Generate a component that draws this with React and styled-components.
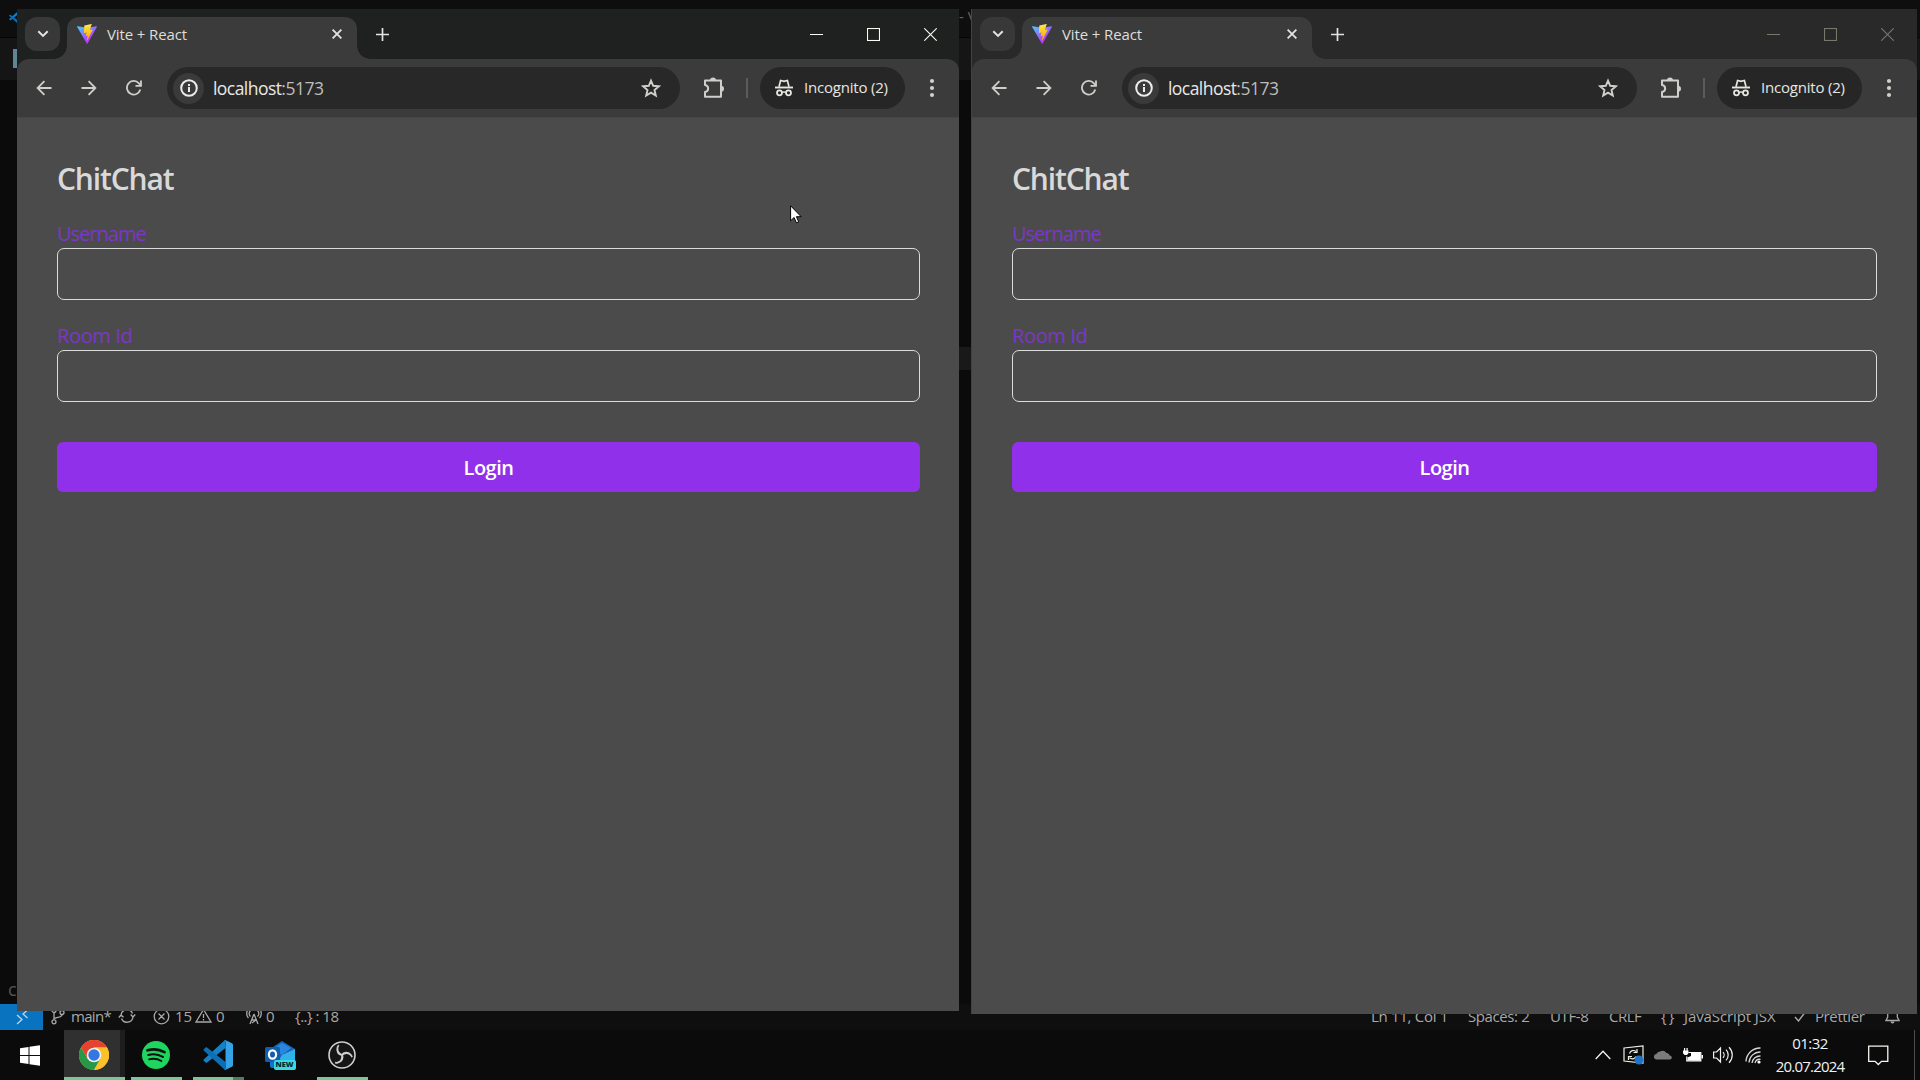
import React from "react";
import styled, { createGlobalStyle, css } from "styled-components";

const Global = createGlobalStyle`
  * { box-sizing: border-box; }
  html, body { margin: 0; padding: 0; background: #0b0b0b; overflow: hidden; }
  body { font-family: "Open Sans", "Noto Sans", sans-serif; color: #e3e3e3; }
  svg { display: block; flex: none; }
`;

const Desktop = styled.div`
  position: relative;
  width: 1920px;
  height: 1080px;
  overflow: hidden;
  display: flex;
  flex-direction: column;
  background: #0b0b0b;
`;

/* ---------- text ---------- */
const Text = styled.span`
  font-size: ${(p) => p.$size || 15}px;
  font-weight: ${(p) => p.$weight || 400};
  letter-spacing: ${(p) => p.$track || 0}px;
  color: ${(p) => p.$color || "inherit"};
  line-height: 1;
  white-space: pre;
`;

/* ---------- editor behind the windows ---------- */
const EditorTitle = styled.div`
  height: 38px;
  flex: none;
  display: flex;
  padding: 12px 0 0 9px;
  background: #0e0e0e;
  border-bottom: 1px solid #050505;
`;
const EditorTitleText = styled(Text)`
  margin-left: 939px;
  margin-top: -3px;
`;
const EditorTabs = styled.div`
  height: 42px;
  flex: none;
  display: flex;
  padding: 11px 0 0 13px;
  background: #151515;
`;
const TabMark = styled.div`
  width: 4px;
  height: 19px;
  background: #5f8793;
`;
const EditorBody = styled.div`
  flex: 1;
  display: flex;
  flex-direction: column;
  justify-content: space-between;
  padding: 267px 0 6px 0;
`;
const EditorLine = styled.div`
  height: 23px;
  margin: 0 40px 0 900px;
  background: #191919;
`;
const EditorHint = styled(Text)`
  padding-left: 8px;
`;
const StatusBar = styled.div`
  height: 26px;
  flex: none;
  display: flex;
  justify-content: space-between;
  background: #0f0f0f;
  color: #a9a9a9;
`;
const StatusGroup = styled.div`
  display: flex;
  align-items: center;
  padding: 0 ${(p) => p.$end || 0}px 2px 0;
`;
const StatusItem = styled.div`
  display: flex;
  align-items: center;
  gap: ${(p) => p.$gap || 4}px;
  margin-left: ${(p) => p.$ml || 0}px;
  width: ${(p) => (p.$w ? p.$w + "px" : "auto")};
`;
const Remote = styled.div`
  width: 43px;
  height: 26px;
  flex: none;
  display: flex;
  align-items: center;
  justify-content: center;
  background: #0a73c0;
`;

/* ---------- taskbar ---------- */
const TaskbarRoot = styled.div`
  height: 50px;
  flex: none;
  display: flex;
  justify-content: space-between;
  background: #0b0b0b;
`;
const TaskGroup = styled.div`
  display: flex;
  align-items: center;
`;
const TaskApp = styled.div`
  width: ${(p) => p.$w}px;
  height: 50px;
  margin-left: ${(p) => p.$ml || 0}px;
  display: flex;
  align-items: center;
  justify-content: center;
  padding-right: ${(p) => p.$pr || 0}px;
  background: ${(p) =>
    p.$active ? "linear-gradient(90deg, #303030 56px, #1d1d1d 56px)" : "transparent"};
  ${(p) => p.$open && css`
    border-bottom: 3px solid transparent;
    border-image: linear-gradient(90deg, #79c794 ${p.$split || 100}%, #4f7f62 ${p.$split || 100}%) 1;
    border-width: 0 0 3px;
    padding-top: 3px;
  `}
`;
const TrayItem = styled.div`
  width: ${(p) => p.$w}px;
  height: 50px;
  display: flex;
  align-items: center;
  justify-content: center;
`;
const Clock = styled.div`
  width: 84px;
  height: 50px;
  display: flex;
  flex-direction: column;
  align-items: center;
  justify-content: center;
  gap: 8px;
  color: #f2f2f2;
`;
const ShowDesktop = styled.div`
  width: 6px;
  height: 50px;
  border-left: 1px solid #4c4c4c;
  margin-left: 10px;
`;

/* ---------- browser ---------- */
const Win = styled.section`
  position: absolute;
  top: 9px;
  left: ${(p) => p.$x}px;
  width: ${(p) => p.$w}px;
  height: ${(p) => p.$h}px;
  display: flex;
  flex-direction: column;
  background: #4b4b4b;
  border-left: ${(p) => (p.$active ? "0" : "1px solid #424242")};
`;
const TitleBar = styled.div`
  height: 50px;
  flex: none;
  display: flex;
  background: ${(p) => (p.$active ? "#1f2020" : "#29292a")};
  padding: 8px ${(p) => (p.$active ? 0 : 1)}px 0 8px;
`;
const TabSearch = styled.div`
  width: 35px;
  height: 34px;
  border-radius: 12px;
  background: #383838;
  display: flex;
  align-items: center;
  justify-content: center;
`;
const Tab = styled.div`
  position: relative;
  width: 290px;
  height: 42px;
  margin-left: 7px;
  padding: 0 15px 8px 10px;
  display: flex;
  align-items: center;
  background: #3b3b3b;
  border-radius: 12px 12px 0 0;
  &::before, &::after {
    content: "";
    position: absolute;
    bottom: 0;
    width: 13px;
    height: 13px;
  }
  &::before {
    left: -13px;
    background: radial-gradient(circle at 0 0, transparent 12.5px, #3b3b3b 13px);
  }
  &::after {
    right: -13px;
    background: radial-gradient(circle at 100% 0, transparent 12.5px, #3b3b3b 13px);
  }
`;
const TabTitle = styled(Text)`
  flex: 1;
  margin-left: 10px;
`;
const NewTab = styled.div`
  width: 51px;
  height: 34px;
  display: flex;
  align-items: center;
  justify-content: center;
`;
const WinButtons = styled.div`
  display: flex;
  margin: -8px 0 0 auto;
  color: ${(p) => (p.$active ? "#fbfbf4" : "#77776c")};
`;
const WinButton = styled.div`
  width: 57px;
  height: 50px;
  padding-top: 1px;
  display: flex;
  align-items: center;
  justify-content: center;
`;
const ToolbarShell = styled.div`
  height: 59px;
  flex: none;
  background: ${(p) => (p.$active ? "#1f2020" : "#29292a")};
`;
const Toolbar = styled.div`
  height: 59px;
  display: flex;
  padding: 8px ${(p) => (p.$active ? 5 : 6)}px 9px 4px;
  background: #3b3b3b;
  border-bottom: 1px solid #454545;
  border-radius: 12px 12px 0 0;
  color: #cfcfcb;
`;
const ToolButton = styled.div`
  width: ${(p) => p.$w || 45}px;
  height: 42px;
  padding-left: ${(p) => p.$pl || 0}px;
  display: flex;
  align-items: center;
  justify-content: center;
`;
const Omnibox = styled.div`
  flex: 1;
  height: 42px;
  margin-left: 11px;
  padding: 0 19px 0 6px;
  display: flex;
  align-items: center;
  border-radius: 21px;
  background: #282828;
`;
const SiteInfo = styled.div`
  width: 31px;
  height: 31px;
  border-radius: 16px;
  background: #3a3a3a;
  display: flex;
  align-items: center;
  justify-content: center;
  color: #ececec;
`;
const Address = styled.div`
  flex: 1;
  display: flex;
  margin-left: 9px;
  padding-top: 1px;
`;
const Divider = styled.div`
  width: 2px;
  height: 20px;
  margin: 11px 12px 0 0;
  background: #5b5b5b;
`;
const Incognito = styled.div`
  width: 145px;
  height: 42px;
  margin-right: 4px;
  padding: 0 0 1px 15px;
  display: flex;
  align-items: center;
  gap: 11px;
  border-radius: 21px;
  background: #262626;
  color: #e6e6e2;
`;

/* ---------- page ---------- */
const Page = styled.main`
  flex: 1;
  display: flex;
  flex-direction: column;
  padding: 40px ${(p) => (p.$active ? 39 : 40)}px 40px 40px;
  background: #4b4b4b;
`;
const Heading = styled.h1`
  margin: 0 0 10px;
  height: 45px;
  font-size: 30px;
  font-weight: 600;
  line-height: 42px;
  letter-spacing: -1.15px;
  color: #d9d9d9;
`;
const Field = styled.label`
  display: flex;
  flex-direction: column;
  margin-bottom: 15px;
`;
const FieldLabel = styled.span`
  height: 35px;
  line-height: 41px;
  font-size: 20px;
  letter-spacing: ${(p) => p.$track}px;
  color: #7c37c8;
`;
const Input = styled.input`
  width: 100%;
  height: 52px;
  border: 1px solid #dcdcdc;
  border-radius: 7px;
  background: transparent;
  outline: none;
`;
const Login = styled.button`
  height: 50px;
  margin-top: 25px;
  padding: 1px 0 0;
  border: 0;
  border-radius: 6px;
  background: #9130ea;
  color: #ffffff;
  font-family: inherit;
  font-size: 20px;
  font-weight: 600;
  letter-spacing: -0.5px;
`;
const Pointer = styled.svg`
  position: absolute;
  left: 790px;
  top: 205px;
`;

/* ---------- drawings ---------- */
const line = { fill: "none", stroke: "currentColor", strokeWidth: 2 };

const ViteLogo = () => (
  <svg width="20" height="20" viewBox="0 0 32 32">
    <defs>
      <linearGradient id="va" x1="0" x2="0.6" y1="0" y2="0.8">
        <stop offset="0" stopColor="#41d1ff" />
        <stop offset="1" stopColor="#bd34fe" />
      </linearGradient>
      <linearGradient id="vb" x1="0.4" x2="0.5" y1="0" y2="0.9">
        <stop offset="0" stopColor="#ffea83" />
        <stop offset="0.2" stopColor="#ffdd35" />
        <stop offset="1" stopColor="#ffa800" />
      </linearGradient>
    </defs>
    <path fill="url(#va)" d="M31.8 4.7 17 31.2a.8.8 0 0 1-1.4 0L.3 4.7a.8.8 0 0 1 .9-1.2l15 2.6h.3l14.600-2.600a.8.8 0 0 1 .7 1.200z" />
    <path fill="url(#vb)" d="M23 0 12 2.200a.4.4 0 0 0-.3.4l-.7 11.400a.4.4 0 0 0 .5.4l3.100-.7a.4.4 0 0 1 .5.5l-.9 4.500a.4.4 0 0 0 .5.5l1.900-.6a.4.4 0 0 1 .5.5l-1.400 7c-.1.400.5.700.7.300l8.500-17a.4.4 0 0 0-.4-.6l-3.200.6a.4.4 0 0 1-.5-.5L23.500.5A.4.4 0 0 0 23 0z" />
  </svg>
);
const Chevron = () => (
  <svg width="12" height="8" viewBox="0 0 12 8"><path {...line} d="M1.300 1.200 6 5.900l4.700-4.700" /></svg>
);
const Cross = () => (
  <svg width="10" height="10" viewBox="0 0 10 10"><path {...line} strokeWidth="1.800" d="M.6.6l8.800 8.800M9.400.6.6 9.400" /></svg>
);
const Plus = () => (
  <svg width="13" height="13" viewBox="0 0 13 13"><path {...line} strokeWidth="1.700" d="M6.500 0v13M0 6.500h13" /></svg>
);
const Back = () => (
  <svg width="16" height="16" viewBox="0 0 16 16"><path {...line} strokeWidth="1.800" d="M15.500 8H1.800M8.400 1.200 1.600 8l6.800 6.800" /></svg>
);
const Forward = () => (
  <svg width="16" height="16" viewBox="0 0 16 16"><path {...line} strokeWidth="1.800" d="M.5 8h13.700M7.600 1.200 14.400 8l-6.800 6.800" /></svg>
);
const Reload = () => (
  <svg width="16" height="16" viewBox="0 0 16 16">
    <path {...line} strokeWidth="1.800" d="M14.300 9.600A6.800 6.800 0 1 1 12.900 3.300L14.800 5.500" />
    <path {...line} strokeWidth="1.800" d="M15 .6v5.300H9.500" />
  </svg>
);
const Info = () => (
  <svg width="18" height="18" viewBox="0 0 18 18">
    <circle cx="9" cy="9" r="7.800" {...line} />
    <path fill="currentColor" d="M8 8h2v5H8zM8 4.900h2v2H8z" />
  </svg>
);
const Star = () => (
  <svg width="20" height="20" viewBox="0 0 20 20">
    <path {...line} strokeWidth="1.900" d="M10 2.600l2.200 5.200 5.600.5-4.300 3.700 1.300 5.500-4.800-2.900-4.800 2.900 1.300-5.500-4.300-3.700 5.600-.5z" />
  </svg>
);
const Puzzle = () => (
  <svg width="22" height="22" viewBox="0 0 22 22">
    <path {...line} strokeWidth="2" strokeLinejoin="round" d="M2 3.500h16v16.200H2v-4.600c4.200-.6 4.200-6.400 0-7z" />
    <path fill="currentColor" d="M7 3.500a3 3 0 0 1 6 0zM18 8.700a3 3 0 0 1 0 6z" />
  </svg>
);
const Spy = () => (
  <svg width="18" height="18" viewBox="0 0 18 18">
    <path {...line} strokeWidth="1.700" d="M4 7.800 5.600 1.500 9 2.300l3.400-.8L14 7.800" />
    <path {...line} strokeWidth="1.900" d="M0 8.500h18" />
    <circle cx="4.500" cy="13.800" r="2.500" {...line} strokeWidth="1.800" />
    <circle cx="13.500" cy="13.800" r="2.500" {...line} strokeWidth="1.800" />
    <path {...line} strokeWidth="1.500" d="M7 13.400q2-1 4 0" />
  </svg>
);
const Dots = () => (
  <svg width="6" height="20" viewBox="0 0 6 20" fill="currentColor">
    <circle cx="3" cy="3" r="2.100" /><circle cx="3" cy="10" r="2.100" /><circle cx="3" cy="17" r="2.100" />
  </svg>
);
const Minimize = () => (
  <svg width="13" height="13" viewBox="0 0 13 13"><path d="M0 6.500h13" {...line} strokeWidth="1" /></svg>
);
const Maximize = () => (
  <svg width="13" height="13" viewBox="0 0 13 13"><rect x=".5" y=".5" width="12" height="12" {...line} strokeWidth="1.100" /></svg>
);
const CloseWin = () => (
  <svg width="13" height="13" viewBox="0 0 13 13"><path d="M.3.3l12.400 12.400M12.700.3.3 12.700" {...line} strokeWidth="1.100" /></svg>
);

const RemoteIcon = () => (
  <svg width="14" height="16" viewBox="0 0 14 16"><path {...line} stroke="#b8d8ee" strokeWidth="1.300" d="M2 6l5 4.500L2 15M12.500 1 8 5l4.500 4" /></svg>
);
const Branch = () => (
  <svg width="14" height="18" viewBox="0 0 14 18" {...line} strokeWidth="1.300">
    <circle cx="3" cy="3.500" r="2" /><circle cx="3" cy="14.800" r="2" /><circle cx="11" cy="5.500" r="2" />
    <path d="M3 5.500v7.300M11 7.500c0 3-4 2.500-7.300 3.800" />
  </svg>
);
const Sync = () => (
  <svg width="18" height="16" viewBox="0 0 18 16" {...line} strokeWidth="1.400">
    <path d="M3 7a6 6 0 0 1 11.500-1.500M15 9A6 6 0 0 1 3.500 10.500M.8 9.500 3 7l2.500 2.300M12.700 6.500 15 9l2.200-2.500" />
  </svg>
);
const ErrorIcon = () => (
  <svg width="17" height="17" viewBox="0 0 17 17" {...line} strokeWidth="1.300"><circle cx="8.500" cy="8.500" r="7.300" /><path d="M5.500 5.500l6 6M11.500 5.500l-6 6" /></svg>
);
const Warn = () => (
  <svg width="17" height="16" viewBox="0 0 17 16" {...line} strokeWidth="1.300"><path d="M8.500 1.500 16 14H1zM8.500 6v4M8.500 11v1.500" /></svg>
);
const Radio = () => (
  <svg width="16" height="17" viewBox="0 0 16 17" {...line} strokeWidth="1.300">
    <path d="M8 6 4 16M8 6l4 10M5.500 12h5M6 15l4-3M4.500 8.500a4 4 0 0 1 0-6M11.500 8.500a4 4 0 0 0 0-6M2.500 10a6.500 6.500 0 0 1 0-9M13.500 10a6.500 6.500 0 0 0 0-9" />
  </svg>
);
const Check = () => (
  <svg width="13" height="12" viewBox="0 0 13 12" {...line} strokeWidth="1.400"><path d="M1 7l3.500 4L12 1" /></svg>
);
const Bell = () => (
  <svg width="15" height="17" viewBox="0 0 15 17">
    <path {...line} strokeWidth="1.300" d="M1 12.500h13L12.300 9V6a4.800 4.800 0 0 0-9.600 0v3z" /><path d="M5.500 13.500a2 2 0 0 0 4 0z" fill="currentColor" />
  </svg>
);

const Windows = () => (
  <svg width="20" height="21" viewBox="0 0 20 21" fill="#fff"><path d="M0 3.200 8.500 2v8H0zM9.500 1.800 20 .3V10H9.500zM0 11h8.500v8L0 17.800zM9.500 11H20v9.700L9.500 19.200z" /></svg>
);
const Chrome = () => (
  <svg width="30" height="30" viewBox="0 0 30 30">
    <circle cx="15" cy="15" r="15" fill="#ffc83d" />
    <path d="M2 7.500A15 15 0 0 1 28 7.500H15L8.500 18.700z" fill="#e8412f" />
    <path d="M2 7.500A15 15 0 0 0 15 30l6.500-11.300H8.500z" fill="#279847" />
    <path d="M28 7.500A15 15 0 0 1 15 30l6.500-11.300L15 7.500z" fill="#fcc12a" />
    <circle cx="15" cy="15" r="7.300" fill="#f2f2f2" /><circle cx="15" cy="15" r="5.700" fill="#3577df" />
  </svg>
);
const Spotify = () => (
  <svg width="28" height="28" viewBox="0 0 28 28">
    <circle cx="14" cy="14" r="14" fill="#1ed55f" />
    <g fill="none" stroke="#0b120d" strokeLinecap="round"><path strokeWidth="2.700" d="M5.500 9.300c5-1.500 12-1 17 1.900" /><path strokeWidth="2.200" d="M6.300 14c4.600-1.300 10.300-.7 14.600 1.900" /><path strokeWidth="1.800" d="M7 18.300c4-1 8.600-.6 12.400 1.700" /></g>
  </svg>
);
const CodeLogo = ({ size = 30 }) => (
  <svg width={size} height={size} viewBox="0 0 30 30">
    <path fill="#1580c6" d="M22 0 1 19.200c-.6.500-.6 1.300 0 1.800l1.600 1.500c.4.300 1 .4 1.500 0L22.500 8z" />
    <path fill="#0c6fb6" d="M22 30 1 10.800c-.6-.5-.6-1.300 0-1.800l1.600-1.500c.4-.3 1-.4 1.500 0L22.500 22z" />
    <path fill="#33a3e6" d="M22 0l7 3.200c.6.300 1 .9 1 1.500v20.600c0 .6-.4 1.200-1 1.500L22 30c-.6 0-.4-.5.500-1.500v-27C21.600.5 21.400 0 22 0z" />
  </svg>
);
const NewTag = styled.div`
  position: absolute;
  right: -1px;
  bottom: 0;
  width: 22px;
  height: 10px;
  display: flex;
  align-items: center;
  justify-content: center;
  border-radius: 2px;
  background: #38dce0;
  color: #062a3a;
  font-family: "Open Sans", sans-serif;
  font-size: 7.5px;
  font-weight: 800;
  line-height: 1;
`;
const OutlookBox = styled.div`
  position: relative;
  width: 30px;
  height: 30px;
`;
const Outlook = () => (
  <OutlookBox>
    <svg width="30" height="30" viewBox="0 0 30 30">
      <path d="M5 9 17 1l13 8v16H5z" fill="#1b62b6" />
      <path d="M8 9 17 3l9 5-9 7z" fill="#2a86dc" />
      <path d="M17 15 30 9v17a2 2 0 0 1-2 2H9z" fill="#2fb2ea" />
      <path d="M5 12l22 16H7a2 2 0 0 1-2-2z" fill="#1273ca" />
      <rect x="0" y="7" width="15" height="15" rx="1.500" fill="#0f5fae" />
      <ellipse cx="7.500" cy="14.500" rx="3.600" ry="4.200" fill="none" stroke="#fff" strokeWidth="2.200" />
    </svg>
    <NewTag>NEW</NewTag>
  </OutlookBox>
);
const Obs = () => (
  <svg width="28" height="28" viewBox="0 0 28 28" fill="none" stroke="#cfcfcf">
    <circle cx="14" cy="14" r="13" fill="#161616" strokeWidth="1.600" />
    {[0, 120, 240].map((a) => (
      <path key={a} transform={`rotate(${a} 14 14)`} strokeWidth="1.700" d="M14.300 14.200C10.500 14 8.300 10.500 9.500 6.500c.3-1 .8-1.700 1.300-2.300M9.500 7c-.3 3 1 5.700 4.500 7" />
    ))}
  </svg>
);

const TrayUp = () => (
  <svg width="16" height="10" viewBox="0 0 16 10"><path d="M.7 9 8 1.300 15.300 9" fill="none" stroke="#f4f4ec" strokeWidth="1.300" /></svg>
);
const TrayUpdate = () => (
  <svg width="21" height="20" viewBox="0 0 21 20" fill="none" stroke="#efefe6" strokeWidth="1.200">
    <path d="M1 3 20 1v17L1 16z" />
    <path d="M6.500 8.500a4 4 0 0 1 6.500-2M14 4v3.500h-3.500M13 11.500a4 4 0 0 1-6.500 1.200M5.500 15v-3.500H9" />
    <circle cx="16" cy="15" r="4.500" fill="#1f74c8" stroke="none" />
  </svg>
);
const TrayCloud = () => (
  <svg width="20" height="10" viewBox="0 0 20 10"><path fill="#7b7b7b" d="M3 9.500a2.800 2.800 0 0 1 .3-5.500A4.500 4.500 0 0 1 7 1.600 5 5 0 0 1 13.500 3c1.800.2 2.700 1.200 3 2.500a2 2 0 0 1 .5 4z" /></svg>
);
const TrayBattery = () => (
  <svg width="20" height="14" viewBox="0 0 20 14">
    <path d="M5.500 4.500h12.300v8.300H3.800V8.500" fill="none" stroke="#fff" strokeWidth="1.200" />
    <path d="M8 5h9.500v7.500H4.500V9.500L8 8zM18.500 7H20v3.500h-1.500zM0 2.500h5.500v2.800L4 7H1.500L0 5.300zM1 0h1.200v3H1zM3.500 0h1.200v3H3.500z" fill="#fff" />
  </svg>
);
const TrayVolume = () => (
  <svg width="20" height="18" viewBox="0 0 20 18" fill="none" stroke="#f0f0f0" strokeWidth="1.200">
    <path d="M.6 6h3L7.500 2v14l-3.900-4h-3zM10 6.200a4 4 0 0 1 0 5.600M13 3.700a7.500 7.500 0 0 1 0 10.600M16 1.200a11 11 0 0 1 0 15.600" />
  </svg>
);
const TrayWifi = () => (
  <svg width="17" height="17" viewBox="0 0 17 17" fill="none" stroke="#d8d8d8" strokeWidth="1.300">
    <path d="M1 14.500A14 14 0 0 1 15.500 1M4 15.500A11 11 0 0 1 15.500 5M7 16a8 8 0 0 1 8.500-7M10 16a5 5 0 0 1 5.500-3.700" />
    <circle cx="14" cy="15" r="1.600" fill="#fff" stroke="none" />
  </svg>
);
const TrayNotice = () => (
  <svg width="21" height="21" viewBox="0 0 21 21"><path d="M.7 1.200h19.100v15.100h-6.300l-3.200 3.200-3.200-3.200H.7z" fill="none" stroke="#f7f7ef" strokeWidth="1.300" /></svg>
);

/* ---------- composition ---------- */
function Browser({ x, w, h, active }) {
  return (
    <Win $x={x} $w={w} $h={h} $active={active}>
      <TitleBar $active={active}>
        <TabSearch><Chevron /></TabSearch>
        <Tab>
          <ViteLogo />
          <TabTitle $size={15} $track={-0.12} $color="#dededa">Vite + React</TabTitle>
          <Cross />
        </Tab>
        <NewTab><Plus /></NewTab>
        <WinButtons $active={active}>
          <WinButton><Minimize /></WinButton>
          <WinButton><Maximize /></WinButton>
          <WinButton><CloseWin /></WinButton>
        </WinButtons>
      </TitleBar>
      <ToolbarShell $active={active}>
        <Toolbar $active={active}>
          <ToolButton><Back /></ToolButton>
          <ToolButton><Forward /></ToolButton>
          <ToolButton><Reload /></ToolButton>
          <Omnibox>
            <SiteInfo><Info /></SiteInfo>
            <Address>
              <Text $size={17.5} $track={-0.55} $color="#e8e8e6">localhost</Text>
              <Text $size={17.5} $track={-0.5} $color="#bdbdbb">:5173</Text>
            </Address>
            <Star />
          </Omnibox>
          <ToolButton $w={66} $pl={2}><Puzzle /></ToolButton>
          <Divider />
          <Incognito>
            <Spy />
            <Text $size={15} $track={-0.2}>Incognito (2)</Text>
          </Incognito>
          <ToolButton $w={45}><Dots /></ToolButton>
        </Toolbar>
      </ToolbarShell>
      <Page $active={active}>
        <Heading>ChitChat</Heading>
        <Field>
          <FieldLabel $track={-1}>Username</FieldLabel>
          <Input />
        </Field>
        <Field>
          <FieldLabel $track={-0.35}>Room Id</FieldLabel>
          <Input />
        </Field>
        <Login type="button">Login</Login>
      </Page>
    </Win>
  );
}

function EditorStatus() {
  return (
    <StatusBar>
      <Remote><RemoteIcon /></Remote>
      <StatusGroup>
        <StatusItem $ml={8} $gap={6} $w={59}><Branch /><Text $track={-0.7}>main*</Text></StatusItem>
        <StatusItem $ml={8} $w={35}><Sync /></StatusItem>
        <StatusItem $gap={5} $w={42}><ErrorIcon /><Text>15</Text></StatusItem>
        <StatusItem $gap={4} $w={51}><Warn /><Text>0</Text></StatusItem>
        <StatusItem $gap={4} $w={49}><Radio /><Text>0</Text></StatusItem>
        <Text $track={-0.5}>{"{..} : 18"}</Text>
      </StatusGroup>
      <StatusSpacer />
      <StatusGroup $end={20}>
        <StatusItem $w={97}><Text $track={-0.3}>Ln 11, Col 1</Text></StatusItem>
        <StatusItem $w={82}><Text $track={-0.4}>Spaces: 2</Text></StatusItem>
        <StatusItem $w={59}><Text $track={-0.4}>UTF-8</Text></StatusItem>
        <StatusItem $w={52}><Text $track={-0.5}>CRLF</Text></StatusItem>
        <StatusItem $w={23}><Text $track={2}>{"{}"}</Text></StatusItem>
        <StatusItem $w={110}><Text $track={-0.1}>JavaScript JSX</Text></StatusItem>
        <StatusItem $gap={8} $w={91}><Check /><Text $track={-0.4}>Prettier</Text></StatusItem>
        <Bell />
      </StatusGroup>
    </StatusBar>
  );
}
const StatusSpacer = styled.div`
  flex: 1;
`;

function Taskbar() {
  return (
    <TaskbarRoot>
      <TaskGroup>
        <TaskApp $w={60}><Windows /></TaskApp>
        <TaskApp $w={61} $ml={4} $pr={1} $active $open><Chrome /></TaskApp>
        <TaskApp $w={51} $ml={6} $pr={2} $open><Spotify /></TaskApp>
        <TaskApp $w={51} $ml={11} $pr={2} $open $split={78}><CodeLogo /></TaskApp>
        <TaskApp $w={51} $ml={11} $pr={2}><Outlook /></TaskApp>
        <TaskApp $w={51} $ml={11} $pr={2} $open><Obs /></TaskApp>
      </TaskGroup>
      <TaskGroup>
        <TrayItem $w={30}><TrayUp /></TrayItem>
        <TrayItem $w={30}><TrayUpdate /></TrayItem>
        <TrayItem $w={30}><TrayCloud /></TrayItem>
        <TrayItem $w={30}><TrayBattery /></TrayItem>
        <TrayItem $w={30}><TrayVolume /></TrayItem>
        <TrayItem $w={30}><TrayWifi /></TrayItem>
        <Clock>
          <Text $track={-0.5}>01:32</Text>
          <Text $track={-0.8}>20.07.2024</Text>
        </Clock>
        <TrayItem $w={52}><TrayNotice /></TrayItem>
        <ShowDesktop />
      </TaskGroup>
    </TaskbarRoot>
  );
}

export default function App() {
  return (
    <Desktop>
      <Global />
      <EditorTitle>
        <CodeLogo size={11} />
        <EditorTitleText $color="#666">- Visual Studio Code</EditorTitleText>
      </EditorTitle>
      <EditorTabs><TabMark /></EditorTabs>
      <EditorBody>
        <EditorLine />
        <EditorHint $size={18} $color="#555">c</EditorHint>
      </EditorBody>
      <EditorStatus />
      <Taskbar />
      <Browser x={17} w={942} h={1002} active />
      <Browser x={971} w={946} h={1005} />
      <Pointer width="13" height="19" viewBox="0 0 13 19">
        <path d="M.6.8v15l3.500-3.300 2.300 5.300 2.300-1-2.300-5.100h4.800z" fill="#fff" stroke="#000" strokeWidth="1" />
      </Pointer>
    </Desktop>
  );
}
